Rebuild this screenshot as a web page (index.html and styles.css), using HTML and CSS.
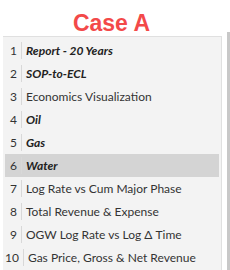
FILE: index.html
```html
<!DOCTYPE html>
<html lang="en">
<head>
  <meta charset="UTF-8" />
  <title>Case A</title>
  <link rel="stylesheet" href="styles.css">
</head>
<body>
  <h1 class="case-title">Case A</h1>
  <div class="list-wrap">
    <ul class="report-list">
      <li><span class="num">1</span><span class="name em">Report - 20 Years</span></li>
      <li><span class="num">2</span><span class="name em">SOP-to-ECL</span></li>
      <li><span class="num">3</span><span class="name">Economics Visualization</span></li>
      <li><span class="num">4</span><span class="name em">Oil</span></li>
      <li><span class="num">5</span><span class="name em">Gas</span></li>
      <li class="selected"><span class="num">6</span><span class="name em">Water</span></li>
      <li><span class="num">7</span><span class="name">Log Rate vs Cum Major Phase</span></li>
      <li><span class="num">8</span><span class="name">Total Revenue &amp; Expense</span></li>
      <li><span class="num">9</span><span class="name">OGW Log Rate vs Log &Delta; Time</span></li>
      <li><span class="num">10</span><span class="name">Gas Price, Gross &amp; Net Revenue</span></li>
    </ul>
    <div class="scroll-edge"></div>
  </div>
</body>
</html>
```

FILE: styles.css
```css
body {
  margin: 0;
  background: #fff;
  font-family: Lato, sans-serif;
  width: 230px;
  height: 270px;
  overflow: hidden;
}

.case-title {
  margin: 0;
  width: 223px;
  height: 36px;
  padding-top: 10px;
  box-sizing: border-box;
  text-align: center;
  font-family: 'Liberation Sans', Arial, sans-serif;
  font-size: 23px;
  font-weight: bold;
  color: #f34949;
  line-height: 26px;
}

.list-wrap {
  display: flex;
  padding-left: 3px;
}

.report-list {
  list-style: none;
  margin: 0;
  padding: 2px 2px 0 2px;
  width: 214px;
  background: #f3f3f3;
  border-top: 1px solid #e0e0e0;
  border-right: 1px solid #e0e0e0;
}

.report-list li {
  display: flex;
  align-items: center;
  height: 23px;
  font-size: 12px;
  color: #333;
}

.report-list li.selected {
  background: #d4d4d4;
}

.num {
  min-width: 12px;
  text-align: right;
  padding-right: 4px;
  border-right: 1px solid #d8d8d8;
  height: 17px;
  line-height: 17px;
}

.name {
  padding-left: 4px;
  white-space: nowrap;
}

.name.em {
  font-weight: bold;
  font-style: italic;
  color: #222;
}

.scroll-edge {
  margin-left: 5px;
  margin-top: -4px;
  width: 3px;
  height: 240px;
  background: #c8c8c8;
}
```
